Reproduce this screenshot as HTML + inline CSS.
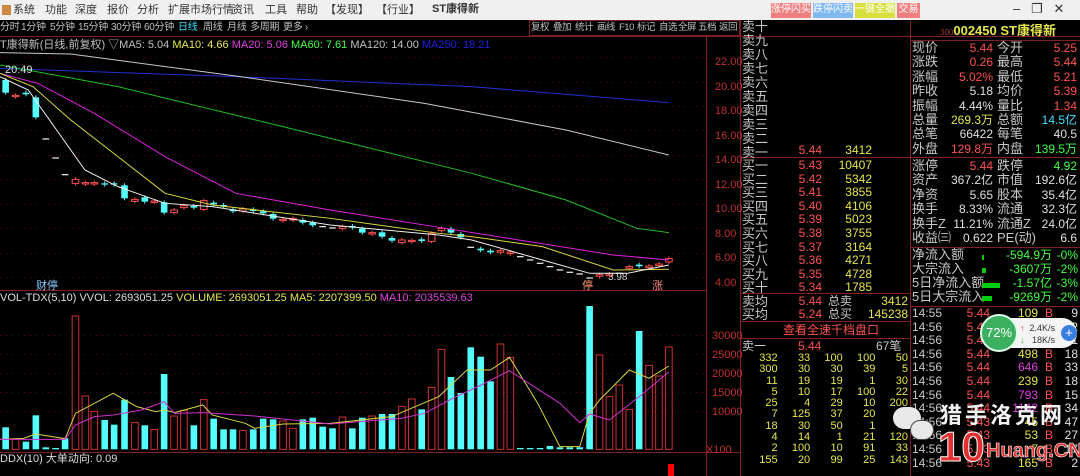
<!DOCTYPE html><html><head><meta charset="utf-8"><style>
*{margin:0;padding:0;box-sizing:border-box}
body{width:1080px;height:476px;background:#000;overflow:hidden;position:relative;font-family:"Liberation Sans","Noto Sans CJK SC",sans-serif;font-size:12px;color:#c0c0c0}
.a{position:absolute;white-space:nowrap;line-height:14px}
.r{text-align:right}
.red{color:#ff5252}.yel{color:#e6e64c}.grn{color:#40ff40}.wht{color:#e0e0e0}.cy{color:#40e0ff}.mag{color:#e040e0}
.m{position:absolute;top:3px;color:#333;font-size:11px;line-height:14px;white-space:nowrap}
.t{position:absolute;top:22px;color:#c0c0c0;font-size:10px;line-height:12px;white-space:nowrap;letter-spacing:-0.3px}
.tb{position:absolute;top:22px;color:#c0c0c0;font-size:9.5px;line-height:12px;white-space:nowrap;letter-spacing:-0.5px}
</style></head><body>
<div class="a" style="left:0;top:0;width:1080px;height:20px;background:#f0f0f0"></div>
<div class="a" style="left:2px;top:5px;width:9px;height:10px;background:#c84"></div>
<span class="m" style="left:13px">系统</span><span class="m" style="left:45px">功能</span><span class="m" style="left:75px">深度</span><span class="m" style="left:107px">报价</span><span class="m" style="left:137px">分析</span><span class="m" style="left:168px">扩展市场行情</span><span class="m" style="left:232px">资讯</span><span class="m" style="left:265px">工具</span><span class="m" style="left:296px">帮助</span><span class="m" style="left:325px">【发现】</span><span class="m" style="left:376px">【行业】</span><span class="m" style="left:432px;font-weight:bold;top:2px">ST康得新</span>
<div class="a" style="left:771px;top:3px;width:40px;height:15px;background:#f08080;color:#fff;font-size:10px;text-align:center">涨停闪买</div>
<div class="a" style="left:813px;top:3px;width:40px;height:15px;background:#80b8f0;color:#fff;font-size:10px;text-align:center">跌停闪卖</div>
<div class="a" style="left:855px;top:3px;width:40px;height:15px;background:#d8e040;color:#fff;font-size:10px;text-align:center">一键全撤</div>
<div class="a" style="left:897px;top:3px;width:23px;height:15px;background:#f08080;color:#fff;font-size:10px;text-align:center">交易</div>
<div class="a" style="left:1013px;top:2px;color:#333;font-size:13px">–&nbsp;&nbsp;&nbsp;❐&nbsp;&nbsp;&nbsp;✕</div>
<span class="t" style="left:0">分时</span><span class="t" style="left:21px">1分钟</span><span class="t" style="left:50px">5分钟</span><span class="t" style="left:78px">15分钟</span><span class="t" style="left:111px">30分钟</span><span class="t" style="left:144px">60分钟</span><span class="t" style="left:178px;color:#40e0ff">日线</span><span class="t" style="left:203px">周线</span><span class="t" style="left:227px">月线</span><span class="t" style="left:250px">多周期</span><span class="t" style="left:283px">更多 ›</span>
<span class="tb" style="left:531px">复权</span><span class="tb" style="left:553px">叠加</span><span class="tb" style="left:575px">统计</span><span class="tb" style="left:597px">画线</span><span class="tb" style="left:619px">F10</span><span class="tb" style="left:637px">标记</span><span class="tb" style="left:659px">自选</span><span class="tb" style="left:678px">全屏</span><span class="tb" style="left:698px">五档</span><span class="tb" style="left:719px">返回</span>
<div class="a" style="left:529px;top:20px;width:211px;height:16px;border:1px solid #802020"></div>
<div class="a" style="left:0;top:38px;font-size:11px;color:#c0c0c0">T康得新(日线,前复权) ▽MA5: 5.04 <span class="yel">MA10: 4.66</span> <span class="mag">MA20: 5.06</span> <span class="grn">MA60: 7.61</span> MA120: 14.00 <span style="color:#2020e0">MA250: 18.21</span></div>
<svg class="a" style="left:0;top:0" width="1080" height="476" id="s">
<g stroke="#802020" stroke-width="1" fill="none">
<line x1="0" y1="36.5" x2="1080" y2="36.5"/>
<line x1="706.5" y1="36" x2="706.5" y2="476"/>
<line x1="740.5" y1="20" x2="740.5" y2="476"/>
<line x1="910.5" y1="20" x2="910.5" y2="476"/>
<line x1="0" y1="290.5" x2="706" y2="290.5"/>
<line x1="0" y1="452.5" x2="740" y2="452.5"/>
<line x1="740" y1="157.5" x2="1080" y2="157.5"/>
<line x1="740" y1="293.5" x2="910" y2="293.5"/>
<line x1="740" y1="321.5" x2="910" y2="321.5"/>
<line x1="740" y1="338.5" x2="910" y2="338.5"/>
<line x1="910" y1="40.5" x2="1080" y2="40.5"/>
<line x1="910" y1="247.5" x2="1080" y2="247.5"/>
<line x1="910" y1="306.5" x2="1080" y2="306.5"/>
</g>
<g stroke="#501010" stroke-dasharray="1 5" id="grid"></g>
<g id="pc" transform="translate(0,40) scale(0.4717,0.3333)"></g>
<g id="vc" transform="translate(0,270) scale(0.4717,0.3333)"></g>
<rect x="668" y="464" width="6" height="12" fill="#f00"/>
</svg>
<div class="a" style="left:715px;top:50px;color:#c03030;font-size:11px;line-height:24.5px">22.00<br>20.00<br>18.00<br>16.00<br>14.00<br>12.00<br>10.00<br>8.00<br>6.00<br>4.00</div>
<div class="a" style="left:712px;top:327px;color:#c03030;font-size:11px;line-height:19px">30000<br>25000<br>20000<br>15000<br>10000</div>
<div class="a" style="left:706px;top:443px;color:#c03030;font-size:11px">X100</div>
<div class="a" style="left:5px;top:63px;font-size:11px;color:#ddd">20.49</div>
<div class="a" style="left:36px;top:279px;font-size:11px;color:#8cf">财停</div>
<div class="a" style="left:582px;top:279px;font-size:11px;color:#f96">停</div>
<div class="a" style="left:652px;top:279px;font-size:11px;color:#f88">涨</div>
<div class="a" style="left:608px;top:271px;font-size:10px;color:#ccc">3.98</div>
<div class="a" style="left:0;top:291px;font-size:11px;color:#ddd">VOL-TDX(5,10) VVOL: 2693051.25 <span class="yel">VOLUME: 2693051.25 MA5: 2207399.50</span> <span class="mag">MA10: 2035539.63</span></div>
<div class="a" style="left:0;top:452px;font-size:11px;color:#ddd">DDX(10) 大单动向: 0.09</div>

<div class="a" style="left:742px;top:20px;color:#c8c8c8;font-size:13px;line-height:14px">卖十<br>卖九<br>卖八<br>卖七<br>卖六<br>卖五<br>卖四<br>卖三<br>卖二<br>卖一</div>
<div class="a r red" style="left:780px;top:143px;width:42px">5.44</div><div class="a r yel" style="left:830px;top:143px;width:42px">3412</div>
<div class="a" style="left:742px;top:159px;color:#c8c8c8;font-size:13px;line-height:13.6px">买一<br>买二<br>买三<br>买四<br>买五<br>买六<br>买七<br>买八<br>买九<br>买十</div>
<div class="a r red" style="left:780px;top:159px;width:42px;line-height:13.6px">5.43<br>5.42<br>5.41<br>5.40<br>5.39<br>5.38<br>5.37<br>5.36<br>5.35<br>5.34</div>
<div class="a r yel" style="left:820px;top:159px;width:52px;line-height:13.6px">10407<br>5342<br>3855<br>4106<br>5023<br>3755<br>3164<br>4271<br>4728<br>1785</div>
<div class="a" style="left:742px;top:295px;color:#c8c8c8;font-size:13px;line-height:13px">卖均<br>买均</div>
<div class="a r red" style="left:780px;top:295px;width:42px;line-height:13px">5.44<br>5.24</div>
<div class="a" style="left:828px;top:295px;color:#c8c8c8;line-height:13px">总卖<br>总买</div>
<div class="a r yel" style="left:850px;top:295px;width:58px;line-height:13px">3412<br>145238</div>
<div class="a red" style="left:783px;top:323px;font-size:12px">查看全速千档盘口</div>
<div class="a" style="left:742px;top:339px;color:#c8c8c8">卖一</div><div class="a red" style="left:798px;top:339px">5.44</div><div class="a" style="left:876px;top:339px;color:#c8c8c8">67笔</div>
<div class="a r yel" style="left:745px;top:353px;width:163px;line-height:11.3px;font-size:11px" id="qd"></div>

<div class="a" style="left:940px;top:24px;color:#e6e64c;font-size:13px"><span style="color:#a03030;font-size:8px">300</span><b>002450 ST康得新</b></div>
<div class="a" style="left:912px;top:41px;color:#c8c8c8;font-size:13px;line-height:14.4px">现价<br>涨跌<br>涨幅<br>昨收<br>振幅<br>总量<br>总笔<br>外盘</div>
<div class="a r" style="left:940px;top:41px;width:53px;line-height:14.4px"><span class="red">5.44</span><br><span class="red">0.26</span><br><span class="red">5.02%</span><br><span class="wht">5.18</span><br><span class="wht">4.44%</span><br><span class="yel">269.3万</span><br><span class="wht">66422</span><br><span class="red">129.8万</span></div>
<div class="a" style="left:997px;top:41px;color:#c8c8c8;font-size:13px;line-height:14.4px">今开<br>最高<br>最低<br>均价<br>量比<br>总额<br>每笔<br>内盘</div>
<div class="a r" style="left:1030px;top:41px;width:47px;line-height:14.4px"><span class="red">5.25</span><br><span class="red">5.44</span><br><span class="red">5.21</span><br><span class="red">5.39</span><br><span class="red">1.34</span><br><span class="cy">14.5亿</span><br><span class="wht">40.5</span><br><span class="grn">139.5万</span></div>
<div class="a" style="left:912px;top:159px;color:#c8c8c8;font-size:13px;line-height:14.4px">涨停<br>资产<br>净资<br>换手<br>换手Z<br>收益㈢</div>
<div class="a r" style="left:940px;top:159px;width:53px;line-height:14.4px"><span class="red">5.44</span><br><span class="wht">367.2亿</span><br><span class="wht">5.65</span><br><span class="wht">8.33%</span><br><span class="wht">11.21%</span><br><span class="wht">0.622</span></div>
<div class="a" style="left:997px;top:159px;color:#c8c8c8;font-size:13px;line-height:14.4px">跌停<br>市值<br>股本<br>流通<br>流通Z<br>PE(动)</div>
<div class="a r" style="left:1030px;top:159px;width:47px;line-height:14.4px"><span class="grn">4.92</span><br><span class="wht">192.6亿</span><br><span class="wht">35.4亿</span><br><span class="wht">32.3亿</span><br><span class="wht">24.0亿</span><br><span class="wht">6.6</span></div>
<div class="a" style="left:912px;top:248px;color:#c8c8c8;font-size:13px;line-height:14px">净流入额<br>大宗流入<br>5日净流入额<br>5日大宗流入</div>
<div class="a" style="left:982px;top:255px;width:2px;height:5px;background:#0c0"></div>
<div class="a" style="left:982px;top:268px;width:4px;height:5px;background:#0c0"></div>
<div class="a" style="left:982px;top:283px;width:18px;height:5px;background:#0c0"></div>
<div class="a" style="left:982px;top:296px;width:10px;height:5px;background:#0c0"></div>
<div class="a r grn" style="left:990px;top:248px;width:62px;line-height:14px">-594.9万<br>-3607万<br>-1.57亿<br>-9269万</div>
<div class="a r grn" style="left:1050px;top:248px;width:28px;line-height:14px">-0%<br>-2%<br>-3%<br>-2%</div>
<div class="a" style="left:912px;top:307px;color:#c8c8c8;line-height:13.6px">14:55<br>14:56<br>14:56<br>14:56<br>14:56<br>14:56<br>14:56<br>14:56<br>14:56<br>14:56<br>14:56<br>14:56</div>
<div class="a r red" style="left:950px;top:307px;width:40px;line-height:13.6px">5.44<br>5.44<br>5.44<br>5.44<br>5.44<br>5.44<br>5.44<br>5.44<br>5.43<br>5.43<br>5.43<br>5.43</div>
<div class="a r" style="left:1000px;top:307px;width:38px;line-height:13.6px"><span class="yel">109</span><br><span class="yel">8</span><br><span class="yel">5</span><br><span class="yel">498</span><br><span class="mag">646</span><br><span class="yel">239</span><br><span class="mag">793</span><br><span class="mag">1142</span><br><span class="yel">45</span><br><span class="yel">53</span><br><span class="yel">7</span><br><span class="yel">165</span></div>
<div class="a red" style="left:1045px;top:307px;line-height:13.6px">B<br>B<br>B<br>B<br>B<br>B<br>B<br>B<br>B<br>B<br>B<br>B</div>
<div class="a r wht" style="left:1055px;top:307px;width:23px;line-height:13.6px">9<br>2<br>1<br>18<br>33<br>18<br>15<br>34<br>47<br>27<br>17<br>2</div>
<div class="a" style="left:985px;top:318px;width:92px;height:30px;border-radius:15px;background:#f4f4f4"></div>
<div class="a" style="left:980px;top:314px;width:38px;height:38px;border-radius:19px;background:#3cb060;border:2px solid #dfe;color:#fff;font-size:13px;line-height:34px;text-align:center">72%</div>
<div class="a" style="left:1020px;top:322px;font-size:9px;color:#333;line-height:12px"><span style="color:#e33">↑</span> &nbsp;2.4K/s<br><span style="color:#3a3">↓</span> &nbsp;&nbsp;18K/s</div>
<div class="a" style="left:1061px;top:325px;width:16px;height:16px;border-radius:8px;background:#3a7fe0;color:#fff;font-size:13px;line-height:16px;text-align:center">+</div>
<div class="a" style="left:893px;top:407px;width:28px;height:22px;border-radius:12px;background:#e8e8e8"></div>
<div class="a" style="left:910px;top:420px;width:24px;height:20px;border-radius:11px;background:#e8e8e8;border:1px solid #444"></div>
<div class="a" style="left:940px;top:404px;font-size:22px;color:#f2f2f2;font-weight:bold;line-height:24px;letter-spacing:3px">猎手洛克网</div>
<div class="a" style="left:938px;top:425px;font-size:42px;color:#e03030;font-weight:bold;line-height:44px;-webkit-text-stroke:1px #fff">10</div>
<div class="a" style="left:986px;top:440px;font-size:20px;color:#e03030;font-weight:bold;line-height:22px;-webkit-text-stroke:0.6px #fff">Huang.CN</div>
<script>
var NS="http://www.w3.org/2000/svg";
function el(p,t,a){var e=document.createElementNS(NS,t);for(var k in a)e.setAttribute(k,a[k]);e.setAttribute("vector-effect","non-scaling-stroke");p.appendChild(e);return e}
var g=document.getElementById("grid");
[57,82,106,130,155,179,204,228,253,277,335,354,373,392,411].forEach(function(y){el(g,"line",{x1:0,y1:y+.5,x2:706,y2:y+.5})});
var pc=document.getElementById("pc"),vc=document.getElementById("vc");
var cd=[[12,"c",120,158],[33,"r",166,170],[55,"c",158,163],[76,"c",172,232],[97,"d",295],[118,"d",352],[138,"d",402],[160,"r",418,430],[181,"r",428,432],[200,"r",428,432],[222,"c",430,434],[242,"c",430,434],[264,"c",436,475],[286,"r",478,484],[307,"c",472,485],[327,"r",483,487],[348,"c",487,518],[369,"r",510,518],[390,"r",497,503],[411,"c",498,503],[432,"r",482,508],[453,"c",488,493],[474,"c",495,500],[494,"c",508,514],[515,"r",507,513],[537,"c",508,513],[558,"c",514,520],[579,"c",522,536],[600,"r",538,542],[621,"r",535,540],[642,"c",540,548],[663,"c",548,556],[684,"d",558],[705,"d",562],[726,"r",560,566],[747,"c",558,563],[768,"c",566,578],[789,"r",578,582],[810,"c",577,590],[831,"c",594,602],[852,"r",600,608],[873,"r",601,605],[894,"c",598,603],[915,"r",580,604],[936,"r",565,572],[956,"c",566,578],[977,"c",582,592],[998,"d",620],[1019,"c",626,631],[1040,"c",632,637],[1061,"r",632,637],[1082,"r",636,641],[1103,"d",648],[1124,"d",658],[1145,"d",668],[1166,"d",678],[1187,"d",688],[1208,"d",695],[1229,"d",700],[1250,"d",712],[1271,"r",704,709],[1292,"r",702,707],[1313,"d",698],[1334,"r",680,685],[1355,"c",674,679],[1376,"r",678,683],[1397,"r",672,677],[1418,"r",656,666]];
cd.forEach(function(c){var x=c[0]-7;if(c[1]=="d"){el(pc,"rect",{x:x,y:c[2],width:14,height:4,fill:"#ddd"});}else if(c[1]=="c"){el(pc,"line",{x1:c[0],y1:c[2]-6,x2:c[0],y2:c[3]+6,stroke:"#54fcfc"});el(pc,"rect",{x:x,y:c[2],width:14,height:c[3]-c[2],fill:"#54fcfc"});}else{el(pc,"line",{x1:c[0],y1:c[2]-6,x2:c[0],y2:c[3]+6,stroke:"#ff5050"});el(pc,"rect",{x:x,y:c[2],width:14,height:c[3]-c[2],fill:"#000",stroke:"#ff5050"});}});
function pl(p,pts,col){el(p,"polyline",{points:pts,fill:"none",stroke:col,"stroke-width":1})}
pl(pc,"0,85 500,110 1000,140 1418,188","#2030d0");
pl(pc,"0,38 150,42 500,108 900,190 1200,270 1418,345","#c8c8c8");
pl(pc,"0,75 250,140 600,260 1000,400 1200,480 1350,565 1418,578","#20c020");
pl(pc,"0,100 80,130 200,220 350,350 500,460 700,510 930,562 1100,600 1300,645 1418,660","#e020e0");
pl(pc,"0,100 70,140 150,240 250,350 350,460 450,495 700,535 930,580 1000,590 1150,620 1300,690 1418,688","#d8d840");
pl(pc,"0,110 60,150 120,270 180,390 250,440 350,490 450,500 700,555 930,585 1000,600 1150,660 1250,700 1330,700 1418,675","#f0f0f0");
var vb=[[12,"c",472],[33,"r",508],[55,"c",515],[76,"c",436],[97,"c",532],[118,"c",534],[138,"c",505],[160,"r",138],[181,"r",378],[200,"r",424],[222,"c",450],[242,"c",464],[264,"c",389],[286,"r",457],[307,"c",466],[327,"r",478],[348,"c",312],[369,"r",438],[390,"r",421],[411,"c",466],[432,"r",389],[453,"c",446],[474,"c",478],[494,"c",478],[515,"r",481],[537,"c",478],[558,"c",446],[579,"c",448],[600,"r",453],[621,"r",475],[642,"c",448],[663,"c",443],[684,"c",470],[705,"c",475],[726,"r",441],[747,"c",475],[768,"c",443],[789,"r",438],[810,"c",432],[831,"c",432],[852,"r",409],[873,"r",387],[894,"c",418],[915,"r",352],[936,"r",238],[956,"c",321],[977,"c",369],[998,"c",232],[1019,"c",260],[1040,"c",334],[1061,"r",222],[1082,"r",262],[1103,"c",534],[1124,"c",534],[1145,"c",534],[1166,"c",528],[1187,"c",532],[1208,"c",532],[1229,"c",532],[1250,"c",108],[1271,"r",255],[1292,"r",380],[1313,"r",345],[1334,"r",418],[1355,"c",183],[1376,"r",286],[1397,"r",318],[1418,"r",231]];
vb.forEach(function(b){var x=b[0]-7;if(b[1]=="c")el(vc,"rect",{x:x,y:b[2],width:14,height:538-b[2],fill:"#54fcfc"});else el(vc,"rect",{x:x,y:b[2],width:14,height:538-b[2],fill:"none",stroke:"#d03030"});});
pl(vc,"0,508 50,505 76,492 138,506 160,430 240,370 290,410 330,425 350,420 370,428 430,405 450,435 520,460 540,475 600,462 700,460 830,440 930,380 990,300 1040,300 1080,262 1140,400 1187,530 1229,530 1250,430 1271,390 1334,300 1376,325 1418,288","#d8d840");
pl(vc,"0,508 138,508 160,465 200,440 240,435 300,420 348,395 370,430 430,428 540,438 700,462 850,445 900,430 960,385 1020,345 1080,302 1187,400 1229,458 1250,432 1292,450 1355,380 1418,306","#d030d0");
var q=[[332,33,100,100,50],[300,30,30,39,5],[11,19,19,1,30],[5,10,17,100,22],[25,4,29,10,200],[7,125,37,20,""],[18,30,50,1,""],[4,14,1,21,120],[2,100,10,91,33],[155,20,99,25,143]];
var h="";q.forEach(function(r){h+='<div style="display:flex">'+r.map(function(v){return '<span style="width:33px;text-align:right">'+v+'</span>'}).join("")+'</div>'});
document.getElementById("qd").innerHTML=h;
</script>
</body></html>
